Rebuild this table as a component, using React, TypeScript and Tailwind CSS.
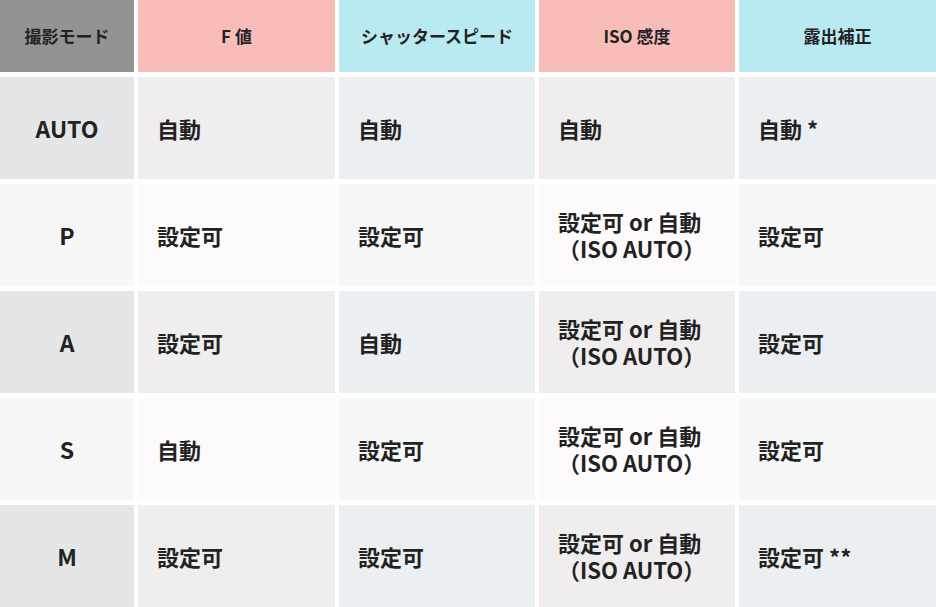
const font = { fontFamily: '"Noto Sans CJK JP", "Noto Sans", sans-serif' };

type Tone = 'dark' | 'light';

const headers = [
  { label: '撮影モード', bg: 'bg-[#939393]' },
  { label: 'F 値', bg: 'bg-[#f8bdb9]' },
  { label: 'シャッタースピード', bg: 'bg-[#b9eaf2]' },
  { label: 'ISO 感度', bg: 'bg-[#f8bdb9]' },
  { label: '露出補正', bg: 'bg-[#b9eaf2]' },
];

const isoBoth = ['設定可 or 自動', '（ISO AUTO）'];

const rows: { mode: string; tone: Tone; cells: (string | string[])[] }[] = [
  { mode: 'AUTO', tone: 'dark', cells: ['自動', '自動', '自動', '自動 *'] },
  { mode: 'P', tone: 'light', cells: ['設定可', '設定可', isoBoth, '設定可'] },
  { mode: 'A', tone: 'dark', cells: ['設定可', '自動', isoBoth, '設定可'] },
  { mode: 'S', tone: 'light', cells: ['自動', '設定可', isoBoth, '設定可'] },
  { mode: 'M', tone: 'dark', cells: ['設定可', '設定可', isoBoth, '設定可 **'] },
];

const modeBg: Record<Tone, string> = { dark: 'bg-[#e5e6e8]', light: 'bg-[#f7f7f7]' };
const pinkBg: Record<Tone, string> = { dark: 'bg-[#f0edee]', light: 'bg-[#fcfafa]' };
const blueBg: Record<Tone, string> = { dark: 'bg-[#ebeff2]', light: 'bg-[#f6f8f8]' };

export default function App() {
  return (
    <div
      className="w-[936px] h-[607px] bg-white grid grid-cols-[134px_197px_196px_196px_197px] grid-rows-[72px_102px_102px_102px_102px_102px] gap-x-[4px] gap-y-[5px] text-[#222222] font-bold"
      style={font}
    >
      {headers.map((h) => (
        <div key={h.label} className={`${h.bg} flex items-center justify-center text-[17px]`}>
          {h.label}
        </div>
      ))}

      {rows.map((row) => (
        <>
          <div
            key={row.mode}
            className={`${modeBg[row.tone]} flex items-center justify-center text-[23px]`}
          >
            {row.mode}
          </div>
          {row.cells.map((cell, i) => (
            <div
              key={`${row.mode}-${i}`}
              className={`${i % 2 === 0 ? pinkBg[row.tone] : blueBg[row.tone]} flex flex-col justify-center pl-[19px] text-[22px] leading-[27px]`}
            >
              {Array.isArray(cell) ? cell.map((line) => <span key={line}>{line}</span>) : cell}
            </div>
          ))}
        </>
      ))}
    </div>
  );
}
